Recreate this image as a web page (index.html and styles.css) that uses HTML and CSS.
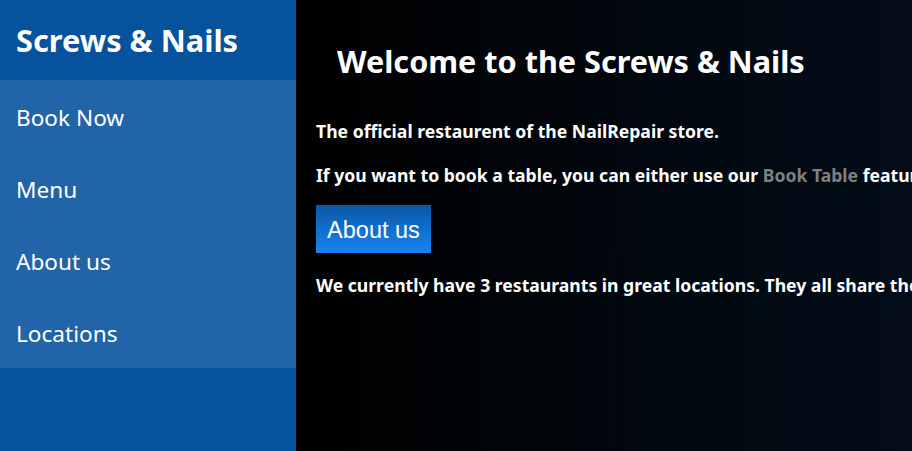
FILE: index.html
```html
<!DOCTYPE html>
<html>
<head>
<meta charset="utf-8">
<link rel="stylesheet" href="styles.css">
</head>
<body>
<aside class="sidebar">
  <div class="brand">Screws &amp; Nails</div>
  <nav class="nav">
    <a class="nav-item" href="#">Book Now</a>
    <a class="nav-item" href="#">Menu</a>
    <a class="nav-item" href="#">About us</a>
    <a class="nav-item" href="#">Locations</a>
  </nav>
</aside>
<main class="content">
  <h1 class="title">Welcome to the Screws &amp; Nails</h1>
  <p class="text first">The official restaurent of the NailRepair store.</p>
  <p class="text">If you want to book a table, you can either use our <a class="link" href="#">Book Table</a> feature or call us directly at one of our locations.</p>
  <button class="btn">About us</button>
  <p class="text">We currently have 3 restaurants in great locations. They all share the same menu and the same great service.</p>
</main>
</body>
</html>
```
FILE: styles.css
```css
html, body {
  margin: 0;
  height: 100%;
}
body {
  display: flex;
  font-family: "Noto Sans", sans-serif;
  color: #fff;
  overflow: hidden;
}
.sidebar {
  width: 296px;
  flex: none;
  background: #07529c;
}
.brand {
  height: 80px;
  display: flex;
  align-items: center;
  padding-left: 16px;
  font-size: 30.8px;
  font-weight: 700;
}
.nav {
  display: flex;
  flex-direction: column;
  background: #2264a8;
}
.nav-item {
  height: 72px;
  box-sizing: border-box;
  padding-top: 3px;
  display: flex;
  align-items: center;
  padding-left: 16px;
  font-size: 22.6px;
  color: #fff;
  text-decoration: none;
}
.content {
  flex: 1;
  min-width: 0;
  background: linear-gradient(to right, #000000, #020d19);
  padding: 0 20px;
  overflow: hidden;
  white-space: nowrap;
}
.title {
  margin: 41px 0 0;
  padding-left: 21px;
  font-size: 30.6px;
  font-weight: 700;
  line-height: 40px;
}
.text {
  margin: 20px 0 0;
  font-size: 17.6px;
  font-weight: 700;
  line-height: 24px;
}
.text.first {
  margin-top: 38px;
}
.link {
  color: #808080;
  text-decoration: none;
}
.btn {
  display: block;
  margin: 18px 0 0;
  height: 48px;
  width: 115px;
  border: none;
  background: linear-gradient(to bottom, #0a58a6, #1884f2);
  color: #fff;
  font-family: "Liberation Sans", Arial, sans-serif;
  font-size: 23.5px;
  padding: 2px 0 0;
}
```
